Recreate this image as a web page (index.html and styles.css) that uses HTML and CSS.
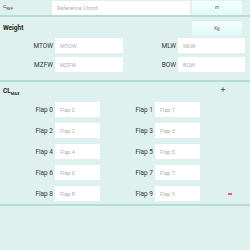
FILE: index.html
```html
<!DOCTYPE html>
<html lang="en">

<head>
    <meta charset="UTF-8">
    <meta name="viewport" content="width=device-width, initial-scale=1.0">
    <title>Aircraft Data</title>
    <link rel="stylesheet" href="styles.css">
</head>

<body>
    <!-- reference chord -->
    <div class="section chord">
        <div class="sym">c<sub>REF</sub></div>
        <input type="text" class="field" placeholder="Reference Chord">
        <button class="unit">m</button>
    </div>

    <!-- weights -->
    <div class="section">
        <div class="head weight-head">
            <span class="title">Weight</span>
            <button class="unit">Kg</button>
        </div>
        <div class="weights">
            <label>MTOW</label>
            <input type="text" class="field" placeholder="MTOW">
            <label>MLW</label>
            <input type="text" class="field" placeholder="MLW">
            <label>MZFW</label>
            <input type="text" class="field" placeholder="MZFW">
            <label>BOW</label>
            <input type="text" class="field" placeholder="BOW">
        </div>
    </div>

    <!-- max lift coefficient per flap setting -->
    <div class="section">
        <div class="head cl-head">
            <span class="title">CL<sub>MAX</sub></span>
            <span class="add">+</span>
        </div>
        <div class="flaps">
            <label>Flap 0</label><input type="text" class="field" placeholder="Flap 0">
            <label>Flap 1</label><input type="text" class="field" placeholder="Flap 1">
            <span></span>
            <label>Flap 2</label><input type="text" class="field" placeholder="Flap 2">
            <label>Flap 3</label><input type="text" class="field" placeholder="Flap 3">
            <span></span>
            <label>Flap 4</label><input type="text" class="field" placeholder="Flap 4">
            <label>Flap 5</label><input type="text" class="field" placeholder="Flap 5">
            <span></span>
            <label>Flap 6</label><input type="text" class="field" placeholder="Flap 6">
            <label>Flap 7</label><input type="text" class="field" placeholder="Flap 7">
            <span></span>
            <label>Flap 8</label><input type="text" class="field" placeholder="Flap 8">
            <label>Flap 9</label><input type="text" class="field" placeholder="Flap 9">
            <span class="remove"></span>
        </div>
    </div>
</body>

</html>
```

FILE: styles.css
```css
body {
    margin: 0;
    height: 250px;
    background-color: #dff1ef;
    font-family: 'Roboto', 'Liberation Sans', sans-serif;
    font-size: 7px;
    color: #333;
}

.section {
    border-bottom: 2px solid #b4ddd4;
}

.chord {
    display: flex;
    align-items: center;
    height: 17px;
    padding-left: 3px;
    box-sizing: border-box;
}

.sym {
    width: 49px;
    font-size: 6px;
    color: #444;
    margin-top: -2px;
}

sub {
    font-size: 4px;
}

.chord .field {
    width: 138px;
    height: 14px;
}

.field {
    border: none;
    outline: none;
    background-color: white;
    padding: 0 0 0 5px;
    box-sizing: border-box;
    height: 15px;
    font-family: inherit;
    font-size: 5.5px;
    color: #333;
}

.field::placeholder {
    color: #b0b0b0;
}

.unit {
    width: 50px;
    height: 14px;
    margin-left: 2px;
    border: none;
    padding: 0;
    background: linear-gradient(#f4ffff, #e3f9f9);
    font-family: inherit;
    font-size: 4.5px;
    color: #555;
}

.head {
    display: flex;
    justify-content: space-between;
    align-items: center;
    padding: 0 8px 0 3px;
}

.weight-head {
    padding-top: 4px;
}

.cl-head {
    padding-top: 4px;
    height: 12px;
}

.title {
    font-weight: bold;
    font-size: 6.5px;
    color: #222;
}

.weights {
    display: grid;
    grid-template-columns: 53px 68px 51px 67px;
    column-gap: 2px;
    row-gap: 4px;
    align-items: center;
    padding: 3px 0 8px;
}

.weights label,
.flaps label {
    text-align: right;
    font-size: 6.5px;
    color: #333;
}

.flaps {
    display: grid;
    grid-template-columns: 53px 45px 51px 45px 1fr;
    column-gap: 2px;
    row-gap: 6px;
    align-items: center;
    padding: 4px 0 3px;
}

.add {
    color: #2a8c3c;
    font-size: 8px;
    font-weight: bold;
    margin-right: 17px;
    margin-top: -5px;
}

.remove {
    justify-self: end;
    margin-right: 18px;
    width: 4px;
    height: 2px;
    background-color: #e06666;
}
```
